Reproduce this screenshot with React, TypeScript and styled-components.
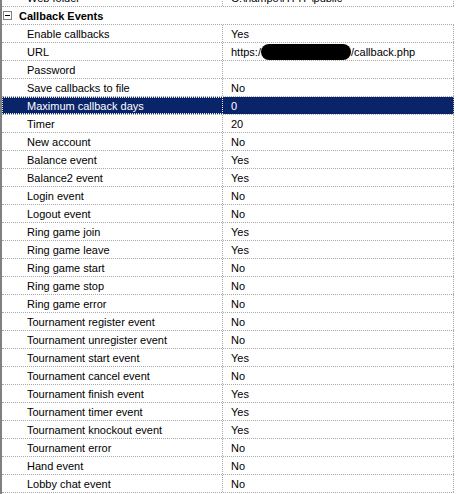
import React from 'react';
import styled, { createGlobalStyle } from 'styled-components';

const GlobalStyle = createGlobalStyle`
  html, body {
    margin: 0;
    padding: 0;
    background: #fff;
  }
  body {
    font-family: "Liberation Sans", Arial, sans-serif;
    font-size: 11px;
    color: #000;
  }
`;

const LINE = '#a8a8a8';
const HIGHLIGHT = '#0a246a';

type Prop = { name: string; value: string; redacted?: boolean };

const properties: Array<Prop> = [
  { name: 'Enable callbacks', value: 'Yes' },
  { name: 'URL', value: '/callback.php', redacted: true },
  { name: 'Password', value: '' },
  { name: 'Save callbacks to file', value: 'No' },
  { name: 'Maximum callback days', value: '0' },
  { name: 'Timer', value: '20' },
  { name: 'New account', value: 'No' },
  { name: 'Balance event', value: 'Yes' },
  { name: 'Balance2 event', value: 'Yes' },
  { name: 'Login event', value: 'No' },
  { name: 'Logout event', value: 'No' },
  { name: 'Ring game join', value: 'Yes' },
  { name: 'Ring game leave', value: 'Yes' },
  { name: 'Ring game start', value: 'No' },
  { name: 'Ring game stop', value: 'No' },
  { name: 'Ring game error', value: 'No' },
  { name: 'Tournament register event', value: 'No' },
  { name: 'Tournament unregister event', value: 'No' },
  { name: 'Tournament start event', value: 'Yes' },
  { name: 'Tournament cancel event', value: 'No' },
  { name: 'Tournament finish event', value: 'Yes' },
  { name: 'Tournament timer event', value: 'Yes' },
  { name: 'Tournament knockout event', value: 'Yes' },
  { name: 'Tournament error', value: 'No' },
  { name: 'Hand event', value: 'No' },
  { name: 'Lobby chat event', value: 'No' },
];

const Frame = styled.div`
  width: 456px;
  height: 494px;
  box-sizing: border-box;
  overflow: hidden;
  background: #fff;
  border-left: 2px solid #808080;
`;

// the grid is scrolled, so the row above the category is cut off
const List = styled.div`
  margin-top: -11px;
  width: 452px;
`;

const Row = styled.div`
  display: grid;
  grid-template-columns: 221px 231px;
  height: 18px;
  box-sizing: border-box;
  border-bottom: 1px dotted ${LINE};
`;

const NameCell = styled.div<{ $selected?: boolean }>`
  display: flex;
  align-items: center;
  box-sizing: border-box;
  padding-left: 25px;
  padding-top: 1px;
  white-space: nowrap;
  overflow: hidden;
  border-right: 1px dotted ${LINE};
  background-clip: padding-box;
  ${({ $selected }) =>
    $selected &&
    `
    background: ${HIGHLIGHT};
    color: #fff;
    border: 1px dotted #e8e8f0;
    padding-left: 24px;
  `}
`;

const ValueCell = styled.div<{ $selected?: boolean }>`
  display: flex;
  align-items: center;
  box-sizing: border-box;
  padding-left: 8px;
  padding-top: 1px;
  white-space: nowrap;
  overflow: hidden;
  border-right: 1px dotted ${LINE};
  background-clip: padding-box;
  ${({ $selected }) =>
    $selected &&
    `
    background: ${HIGHLIGHT};
    color: #fff;
  `}
`;

const CategoryRow = styled.div`
  display: flex;
  align-items: center;
  height: 18px;
  box-sizing: border-box;
  border-bottom: 1px dotted ${LINE};
`;

const MinusBox = styled.span`
  position: relative;
  width: 9px;
  height: 9px;
  margin-left: 1px;
  box-sizing: border-box;
  border: 1px solid #808080;
  background: #fff;

  &::after {
    content: '';
    position: absolute;
    left: 1px;
    top: 3px;
    width: 5px;
    height: 1px;
    background: #000;
  }
`;

const CategoryLabel = styled.span`
  margin-left: 7px;
  padding-top: 1px;
  font-weight: bold;
`;

const Blackout = styled.span`
  display: inline-block;
  width: 90px;
  height: 16px;
  border-radius: 8px;
  background: #000;
`;

const App: React.FC = () => {
  return (
    <>
      <GlobalStyle />
      <Frame>
        <List>
          <Row>
            <NameCell>Web folder</NameCell>
            <ValueCell>C:\nampo\HTTP\public</ValueCell>
          </Row>

          <CategoryRow>
            <MinusBox />
            <CategoryLabel>Callback Events</CategoryLabel>
          </CategoryRow>

          {properties.map((prop) => {
            const selected = prop.name === 'Maximum callback days';
            return (
              <Row key={prop.name}>
                <NameCell $selected={selected}>{prop.name}</NameCell>
                <ValueCell $selected={selected}>
                  {prop.redacted ? (
                    <>
                      https:/
                      <Blackout />
                      {prop.value}
                    </>
                  ) : (
                    prop.value
                  )}
                </ValueCell>
              </Row>
            );
          })}
        </List>
      </Frame>
    </>
  );
};

export default App;
